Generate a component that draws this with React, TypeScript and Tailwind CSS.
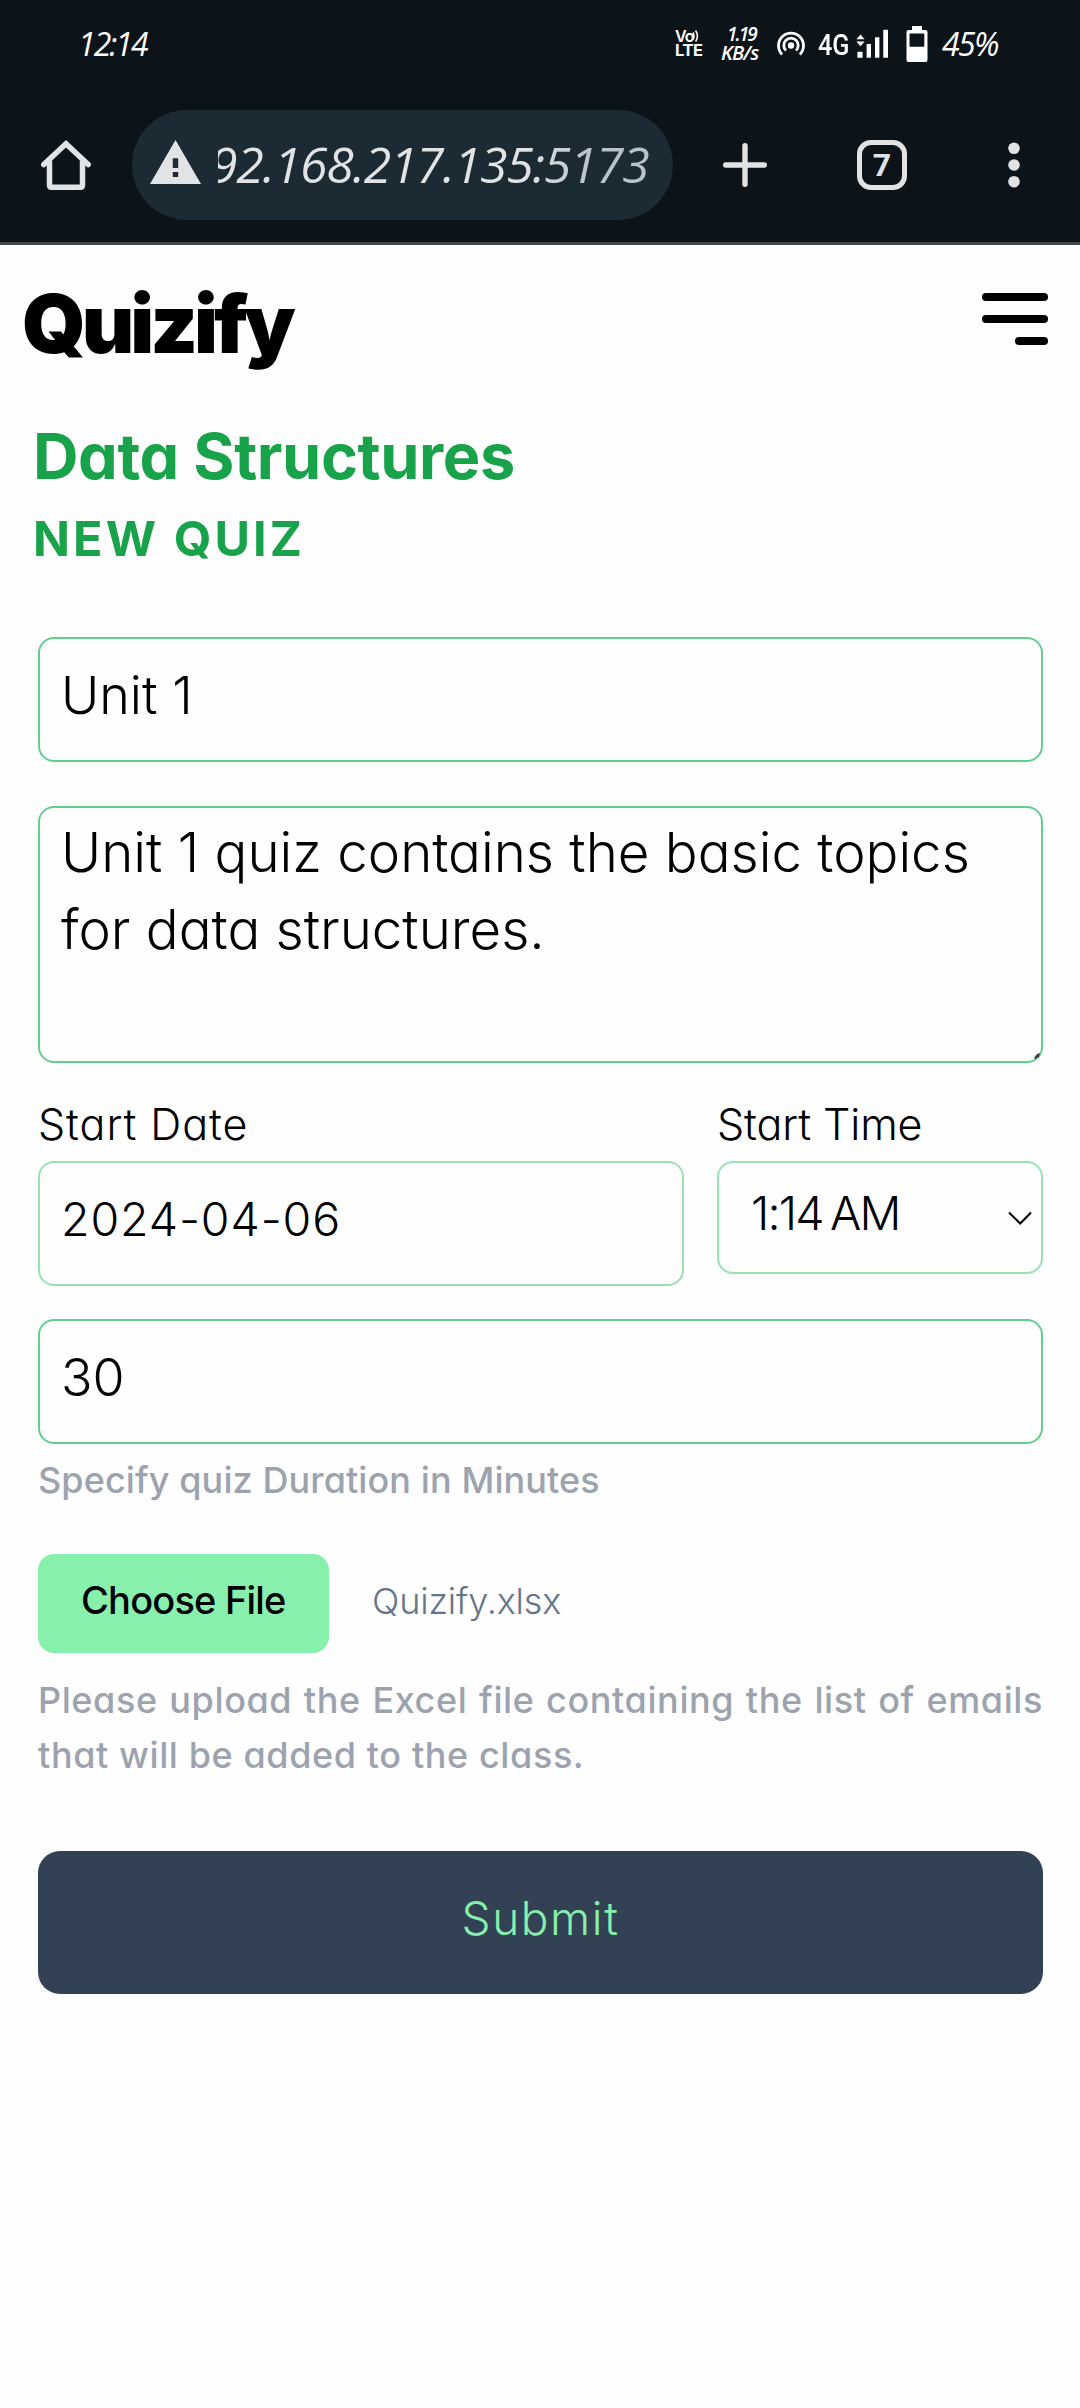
import type { ReactNode } from "react";

function StatusBar() {
  return (
    <div className="flex h-[88px] items-start pl-[78px] text-white">
      <span className="mt-[22px] font-['Open_Sans'] text-[32px] leading-[44px] italic tracking-[-2px]">12:14</span>
      <div className="ml-auto flex h-[88px] w-[405px]">
        <div className="mt-[29px] w-[46px] font-[Inter] font-bold">
          <div className="flex h-[14px] items-center">
            <span className="text-[16px] leading-[14px] font-semibold tracking-[-1px]">Vo</span>
            <svg className="-ml-px h-[14px] w-[8px]" viewBox="0 0 8 14" fill="none" stroke="currentColor" strokeWidth="1.6">
              <path d="M1 3.5q2 3.5 0 7M3.6 1.5q3.6 5.5 0 11" />
            </svg>
          </div>
          <div className="text-[16.5px] leading-[15px] tracking-[-0.4px]">LTE</div>
        </div>
        <div className="mt-[25px] w-[56px] font-['Open_Sans'] font-semibold italic">
          <div className="pl-[6px] text-[19px] leading-[19px] tracking-[-1.9px]">1.19</div>
          <div className="text-[20px] leading-[18px] tracking-[-0.8px]">KB/s</div>
        </div>
        <svg className="mt-[31px] h-[26px] w-[28px]" viewBox="0 0 28 26" fill="none" stroke="currentColor" strokeWidth="2.8">
          <circle cx="14" cy="14.5" r="3.2" fill="currentColor" stroke="none" />
          <path d="M9 19.6a7.2 7.2 0 1 1 10 0" />
          <path d="M5.1 23.4a12.5 12.5 0 1 1 17.8 0" />
        </svg>
        <span className="mt-[27px] ml-[13px] w-[38px] origin-left scale-x-[0.84] font-[Roboto] text-[30px] leading-[35px] font-medium">4G</span>
        <svg className="mt-[29px] h-[30px] w-[32px]" viewBox="0 0 32 30" fill="currentColor">
          <path d="M4.5 5.5 8.6 10.3H.4ZM.4 12.5H8.6L4.5 17.3Z" />
          <path d="M1.4 22.7h5.2v6H1.4zM10.6 15h4.4v13.7h-4.4zM19 8.3h4.4v20.4H19zM27.3.8h4.7v27.9h-4.7z" />
        </svg>
        <svg className="mt-[26px] ml-[18px] h-[36px] w-[22px]" viewBox="0 0 22 36" fill="currentColor">
          <path fillRule="evenodd" d="M6 0h10v4h3.5a2 2 0 0 1 2 2v28a2 2 0 0 1-2 2h-17a2 2 0 0 1-2-2V6a2 2 0 0 1 2-2H6ZM3.5 7.5v13.2h14.8V7.5Z" />
        </svg>
        <span className="mt-[22px] ml-[14px] font-['Open_Sans'] text-[32px] leading-[44px] italic tracking-[-1.6px]">45%</span>
      </div>
    </div>
  );
}

function BrowserBar() {
  return (
    <div className="flex h-[154px] items-start pt-[22px] text-[#e1e3e5]">
      <svg className="mt-[30px] ml-[41px] h-[50px] w-[50px]" viewBox="0 0 50 50" fill="none" stroke="currentColor" strokeWidth="5.5">
        <path d="M2.8 24.5 25 3.8 47.2 24.5" strokeLinecap="round" />
        <path d="M8.5 21V45.2Q8.5 47.2 10.5 47.2H39.5Q41.5 47.2 41.5 45.2V21" />
      </svg>
      <div className="ml-[41px] flex h-[110px] w-[541px] items-center rounded-full bg-[#1b2a33] pl-[18px]">
        <svg className="-mt-[6px] h-[44px] w-[51px]" viewBox="0 0 51 44">
          <path d="M25.5 0 51 44H0Z" fill="currentColor" />
          <path d="M22.8 18.2h5.4v9.8h-5.4zM22.8 32h5.4v5h-5.4z" fill="#1b2a33" />
        </svg>
        <div className="ml-[17px] h-[70px] w-[440px] overflow-hidden">
          <span className="-ml-[8px] block bg-gradient-to-r from-[#e1e3e5] from-70% to-[#b9c3cb] to-85% bg-clip-text font-['Open_Sans'] text-[50px] leading-[68px] tracking-[-1.3px] whitespace-nowrap text-transparent italic">
            92.168.217.135:5173
          </span>
        </div>
      </div>
      <svg className="mt-[33px] ml-[50px] h-[44px] w-[44px]" viewBox="0 0 44 44" stroke="currentColor" strokeWidth="5.4" strokeLinecap="round">
        <path d="M22 2.7V41.3M2.7 22H41.3" />
      </svg>
      <div className="mt-[30px] ml-[90px] flex size-[50px] items-center justify-center rounded-[14px] border-[5.5px] border-[#e1e3e5]">
        <span className="font-[Roboto] text-[32px] leading-[38px] font-bold">7</span>
      </div>
      <svg className="mt-[32px] ml-[101px] h-[46px] w-[12px]" viewBox="0 0 12 46" fill="currentColor">
        <circle cx="6" cy="6.3" r="5.8" />
        <circle cx="6" cy="23" r="5.8" />
        <circle cx="6" cy="39.7" r="5.8" />
      </svg>
    </div>
  );
}

function Field({ className, children }: { className: string; children: ReactNode }) {
  return <div className={`rounded-[16px] border-2 ${className}`}>{children}</div>;
}

export default function App() {
  return (
    <div className="min-h-[2408px] w-[1080px] bg-[#fefefe] font-[Inter,sans-serif] text-black [font-feature-settings:'cv11']">
      <div className="h-[245px] border-b-[3px] border-[#45484c] bg-[#0c1319]">
        <StatusBar />
        <BrowserBar />
      </div>

      <header className="flex h-[175px] items-start justify-between pt-[37px] pr-[32px] pl-[22px]">
        <span className="mt-[2px] text-[81px] leading-[80px] font-black tracking-[-4px]">Quizify</span>
        <div className="mt-[11px] flex w-[66px] flex-col items-end gap-[14px]">
          <span className="h-[8px] w-full rounded-full bg-black" />
          <span className="h-[8px] w-full rounded-full bg-black" />
          <span className="h-[8px] w-1/2 rounded-full bg-black" />
        </div>
      </header>

      <div className="h-[217px] pl-[33px] font-bold text-[#18a34b]">
        <h1 className="text-[63px] leading-[72px] tracking-[-0.4px]">Data Structures</h1>
        <h2 className="mt-[22px] text-[48.5px] leading-[50px] tracking-[3.1px]">NEW QUIZ</h2>
      </div>

      <form className="mx-[38px] w-[1005px] font-light">
        <Field className="h-[125px] border-[#62cf8c] pt-[27px] pl-[21px] text-[52px] leading-[60px]">Unit 1</Field>

        <Field className="relative mt-[44px] h-[257px] border-[#62cf8c] pt-[6px] pl-[21px] text-[54.6px] leading-[77px]">
          Unit 1 quiz contains the basic topics
          <br />
          for data structures.
          <svg className="absolute right-[1px] bottom-[2px] size-[6px]" viewBox="0 0 6 6" fill="#2f4a3c">
            <path d="M0 5 3 1 6 0 5 4 1.5 6Z" />
          </svg>
        </Field>

        <div className="mt-[36px] flex gap-[33px]">
          <div className="w-[646px]">
            <div className="text-[43px] leading-[50px] tracking-[0.95px]">Start Date</div>
            <Field className="mt-[12px] h-[125px] border-[#96e3b1] pt-[28px] pl-[21px] text-[46.5px] leading-[56px] tracking-[0.9px]">
              2024-04-06
            </Field>
          </div>
          <div className="w-[326px]">
            <div className="text-[43px] leading-[50px] tracking-[-0.1px]">Start Time</div>
            <Field className="mt-[12px] flex h-[113px] justify-between border-[#96e3b1] pt-[22px] pr-[9px] pl-[32px] text-[46.5px] leading-[56px] tracking-[-1.8px]">
              <span className="[word-spacing:-4px]">1:14 AM</span>
              <svg className="mt-[26px] h-[14px] w-[24px]" viewBox="0 0 24 14" fill="none" stroke="black" strokeWidth="2">
                <path d="M1 1.5 12.2 12.5 23 1.5" />
              </svg>
            </Field>
          </div>
        </div>

        <Field className="mt-[33px] h-[125px] border-[#62cf8c] pt-[27px] pl-[21px] text-[52px] leading-[60px]">30</Field>
        <p className="mt-[11px] text-[36px] leading-[50px] font-[450] tracking-[0.1px] text-[#9ca3af]">
          Specify quiz Duration in Minutes
        </p>

        <div className="mt-[49px] flex h-[99px]">
          <div className="w-[291px] rounded-[16px] bg-[#88f0ad] pt-[21px] pl-[43px] text-[38px] leading-[50px] font-medium tracking-[-0.8px] whitespace-nowrap">
            Choose File
          </div>
          <span className="pt-[22px] pl-[43px] text-[36px] leading-[50px] tracking-[-0.15px] text-[#64748b]">Quizify.xlsx</span>
        </div>

        <p className="mt-[20px] text-justify text-[36px] leading-[55px] font-[450] tracking-[0.6px] text-[#9ca3af]">
          Please upload the Excel file containing the list of emails that will be added to the class.
        </p>

        <div className="mt-[68px] h-[143px] rounded-[22px] bg-[#334155] pt-[37px] text-center text-[46px] leading-[60px] tracking-[1.6px] text-[#86efac]">
          Submit
        </div>
      </form>
    </div>
  );
}
